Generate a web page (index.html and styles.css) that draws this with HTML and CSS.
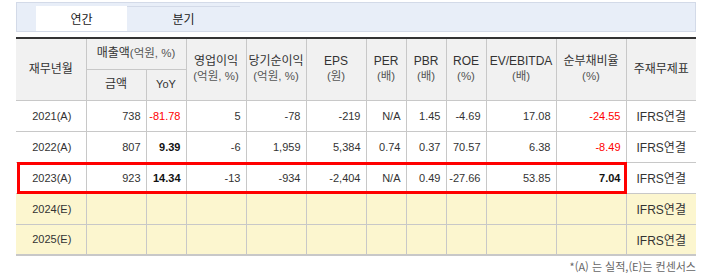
FILE: index.html
```html
<!DOCTYPE html>
<html lang="ko">
<head>
<meta charset="utf-8">
<link rel="stylesheet" href="styles.css">
</head>
<body>
<div class="page">
  <div class="tabs">
    <div class="tab active">연간</div>
    <div class="tab">분기</div>
  </div>
  <div class="wrap">
    <table class="fin">
      <colgroup>
        <col style="width:70px"><col style="width:60px"><col style="width:40px"><col style="width:60px"><col style="width:60px"><col style="width:60px"><col style="width:40px"><col style="width:40px"><col style="width:40px"><col style="width:70px"><col style="width:70px"><col style="width:70px">
      </colgroup>
      <thead>
        <tr class="h1">
          <th rowspan="2">재무년월</th>
          <th colspan="2">매출액<span class="unit-inline">(억원, %)</span></th>
          <th rowspan="2">영업이익<br><span class="unit">(억원, %)</span></th>
          <th rowspan="2">당기순이익<br><span class="unit">(억원, %)</span></th>
          <th rowspan="2">EPS<br><span class="unit">(원)</span></th>
          <th rowspan="2">PER<br><span class="unit">(배)</span></th>
          <th rowspan="2">PBR<br><span class="unit">(배)</span></th>
          <th rowspan="2">ROE<br><span class="unit">(%)</span></th>
          <th rowspan="2">EV/EBITDA<br><span class="unit">(배)</span></th>
          <th rowspan="2">순부채비율<br><span class="unit">(%)</span></th>
          <th rowspan="2">주재무제표</th>
        </tr>
        <tr class="h2">
          <th>금액</th>
          <th class="lat">YoY</th>
        </tr>
      </thead>
      <tbody>
        <tr>
          <td class="yr">2021(A)</td><td>738</td><td class="red">-81.78</td><td>5</td><td>-78</td><td>-219</td><td>N/A</td><td>1.45</td><td>-4.69</td><td>17.08</td><td class="red">-24.55</td><td class="std">IFRS연결</td>
        </tr>
        <tr>
          <td class="yr">2022(A)</td><td>807</td><td class="b">9.39</td><td>-6</td><td>1,959</td><td>5,384</td><td>0.74</td><td>0.37</td><td>70.57</td><td>6.38</td><td class="red">-8.49</td><td class="std">IFRS연결</td>
        </tr>
        <tr>
          <td class="yr">2023(A)</td><td>923</td><td class="b">14.34</td><td>-13</td><td>-934</td><td>-2,404</td><td>N/A</td><td>0.49</td><td>-27.66</td><td>53.85</td><td class="b">7.04</td><td class="std">IFRS연결</td>
        </tr>
        <tr class="est">
          <td class="yr">2024(E)</td><td></td><td></td><td></td><td></td><td></td><td></td><td></td><td></td><td></td><td></td><td class="std">IFRS연결</td>
        </tr>
        <tr class="est">
          <td class="yr">2025(E)</td><td></td><td></td><td></td><td></td><td></td><td></td><td></td><td></td><td></td><td></td><td class="std">IFRS연결</td>
        </tr>
      </tbody>
    </table>
    <div class="highlight"></div>
  </div>
  <div class="note">*(A) 는 실적,(E)는 컨센서스</div>
</div>
</body>
</html>
```

FILE: styles.css
```css
* { box-sizing: border-box; }
html, body { margin: 0; padding: 0; background: #fff; }
body {
  font-family: "Liberation Sans", "Noto Sans CJK KR", sans-serif;
  font-size: 12px;
  color: #333;
}
.page {
  width: 708px;
  padding: 2px 12px 0 16px;
}
.tabs {
  height: 30px;
  background: #e8eef8;
  border: 1px solid #d3dae8;
  display: flex;
  align-items: flex-end;
  padding-left: 19px;
}
.tab {
  width: 91px;
  height: 25px;
  display: flex;
  align-items: center;
  justify-content: center;
  font-family: "Noto Sans CJK KR", sans-serif;
  font-size: 12px;
  color: #222;
  border-top: 1px solid #d3dae8;
  padding-bottom: 2px;
}
.tab + .tab { width: 113px; }
.tab.active {
  background: #fff;
  border-top-color: #fff;
}
.wrap {
  position: relative;
  margin-top: 5px;
}
.fin {
  width: 680px;
  border-collapse: collapse;
  table-layout: fixed;
  border-top: 2px solid #333;
  border-bottom: 2px solid #c8c8c8;
}
.fin th, .fin td {
  border: 1px solid #c8c8c8;
  padding: 0;
}
.fin tr > :first-child { border-left: none; }
.fin tr > :last-child { border-right: none; }
.fin th {
  background: #f1f1f1;
  font-weight: normal;
  font-family: "Liberation Sans", "Noto Sans CJK KR", sans-serif;
  font-size: 12px;
  color: #333;
  line-height: 15px;
  text-align: center;
}
.fin .h1 { height: 31px; }
.fin .h2 { height: 31px; }
.fin .unit { color: #555; font-size: 11.5px; }
.fin .unit-inline { color: #555; font-size: 11.5px; }
.fin .lat { font-size: 11px; }
.fin tbody tr { height: 31px; }
.fin td {
  text-align: right;
  padding-right: 5px;
  font-size: 11px;
  color: #333;
}
.fin td.yr {
  text-align: center;
  padding-right: 0;
  padding-left: 2px;
  font-size: 11px;
}
.fin td.std {
  text-align: center;
  padding-right: 0;
  font-size: 12px;
}
.fin td.red { color: #f00; }
.fin td.b { font-weight: bold; color: #111; }
.fin .est td { background: #fcf6cf; }
.highlight {
  position: absolute;
  left: 1px;
  top: 125px;
  width: 610px;
  height: 32px;
  border: 3px solid #f00;
  pointer-events: none;
}
.note {
  text-align: right;
  margin-top: 2px;
  font-family: "Noto Sans CJK KR", sans-serif;
  font-size: 11px;
  color: #666;
}
```
